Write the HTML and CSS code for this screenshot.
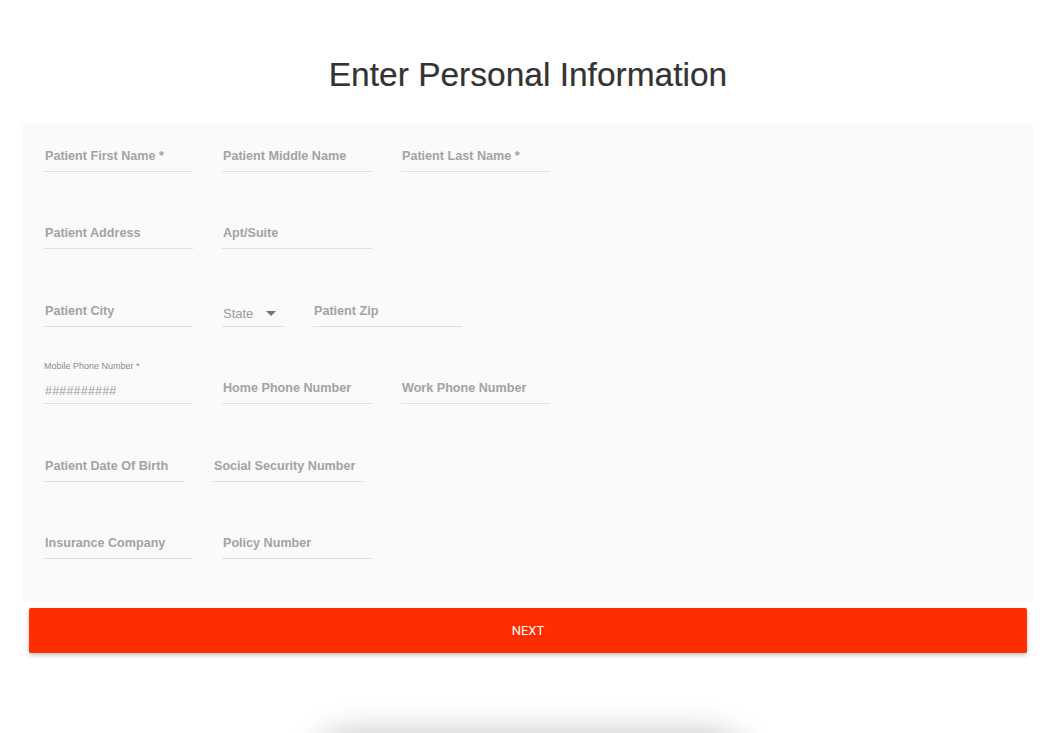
FILE: index.html
```html
<!DOCTYPE html>
<html>
<head>
<meta charset="utf-8">
<link rel="stylesheet" href="styles.css">
</head>
<body>
<h1 class="title">Enter Personal Information</h1>
<form class="panel">
  <div class="row">
    <div class="field w149"><span class="label">Patient First Name *</span></div>
    <div class="field w150"><span class="label">Patient Middle Name</span></div>
    <div class="field w149"><span class="label">Patient Last Name *</span></div>
  </div>
  <div class="row">
    <div class="field w149"><span class="label">Patient Address</span></div>
    <div class="field w150"><span class="label">Apt/Suite</span></div>
  </div>
  <div class="row">
    <div class="field w149"><span class="label">Patient City</span></div>
    <div class="field select">
      <span class="select-text">State</span>
      <svg class="caret" width="10" height="5" viewBox="0 0 10 5"><path d="M0 0h10L5 5z" fill="#757575"/></svg>
    </div>
    <div class="field w149"><span class="label">Patient Zip</span></div>
  </div>
  <div class="row">
    <div class="field w149 floated">
      <span class="small-label">Mobile Phone Number *</span>
      <span class="placeholder">##########</span>
    </div>
    <div class="field w150"><span class="label">Home Phone Number</span></div>
    <div class="field w149"><span class="label">Work Phone Number</span></div>
  </div>
  <div class="row row-tight">
    <div class="field w141"><span class="label">Patient Date Of Birth</span></div>
    <div class="field w150"><span class="label">Social Security Number</span></div>
  </div>
  <div class="row">
    <div class="field w149"><span class="label">Insurance Company</span></div>
    <div class="field w150"><span class="label">Policy Number</span></div>
  </div>
</form>
<button class="next" type="button">NEXT</button>
<div class="ghost"></div>
</body>
</html>
```
FILE: styles.css
```css
html, body {
  margin: 0;
  padding: 0;
  background: #ffffff;
  overflow: hidden;
  height: 733px;
}
body {
  font-family: "Liberation Sans", Arial, sans-serif;
  position: relative;
}
.title {
  margin: 0;
  height: 124px;
  box-sizing: border-box;
  padding-top: 55px;
  text-align: center;
  font-size: 33.5px;
  line-height: 40px;
  font-weight: normal;
  color: #333333;
  padding-left: 14px;
  -webkit-text-stroke: 0.2px #333333;
}
.panel {
  margin: 0 9px 0 22px;
  background: #fafafa;
  height: 478px;
  box-sizing: border-box;
  padding: 8px 22px 0 22px;
  display: flex;
  flex-direction: column;
  gap: 37.4px;
}
.row {
  display: flex;
  gap: 29px;
}
.row-tight {
  gap: 28px;
}
.field {
  height: 40px;
  box-sizing: border-box;
  border-bottom: 1px solid #e0e0e0;
  display: flex;
  flex-direction: column;
  justify-content: flex-end;
  flex: none;
}
.w149 { width: 149px; }
.w150 { width: 150px; }
.w141 { width: 141px; }
.label {
  font-size: 12.6px;
  line-height: 16px;
  font-weight: bold;
  color: #a3a3a3;
  padding: 0 0 7px 1px;
  white-space: nowrap;
}
.small-label {
  font-size: 9px;
  line-height: 11px;
  color: #8a8a8a;
  margin-bottom: 11px;
  white-space: nowrap;
}
.placeholder {
  font-size: 12.5px;
  line-height: 16px;
  color: #9e9e9e;
  padding: 0 0 4px 1px;
  letter-spacing: 0.2px;
}
.select {
  width: 62px;
  flex-direction: row;
  align-items: flex-end;
  justify-content: space-between;
  padding: 0 8px 4px 1px;
}
.select-text {
  font-size: 13px;
  line-height: 16px;
  color: #9a9a9a;
}
.caret {
  margin-bottom: 6px;
}
.next {
  display: block;
  margin: 6px 15px 0 29px;
  width: calc(100% - 44px);
  height: 45px;
  border: none;
  border-radius: 2px;
  background: #ff2e00;
  color: #ffffff;
  font-family: "Roboto", "Liberation Sans", sans-serif;
  font-size: 13px;
  font-weight: 400;
  padding: 0;
  box-shadow: 0 2px 4px rgba(0, 0, 0, 0.25);
}
.ghost {
  position: absolute;
  left: 315px;
  top: 742px;
  width: 430px;
  height: 80px;
  border-radius: 40px;
  background: #ffffff;
  box-shadow: 0 0 30px 12px rgba(0, 0, 0, 0.2);
}
```
